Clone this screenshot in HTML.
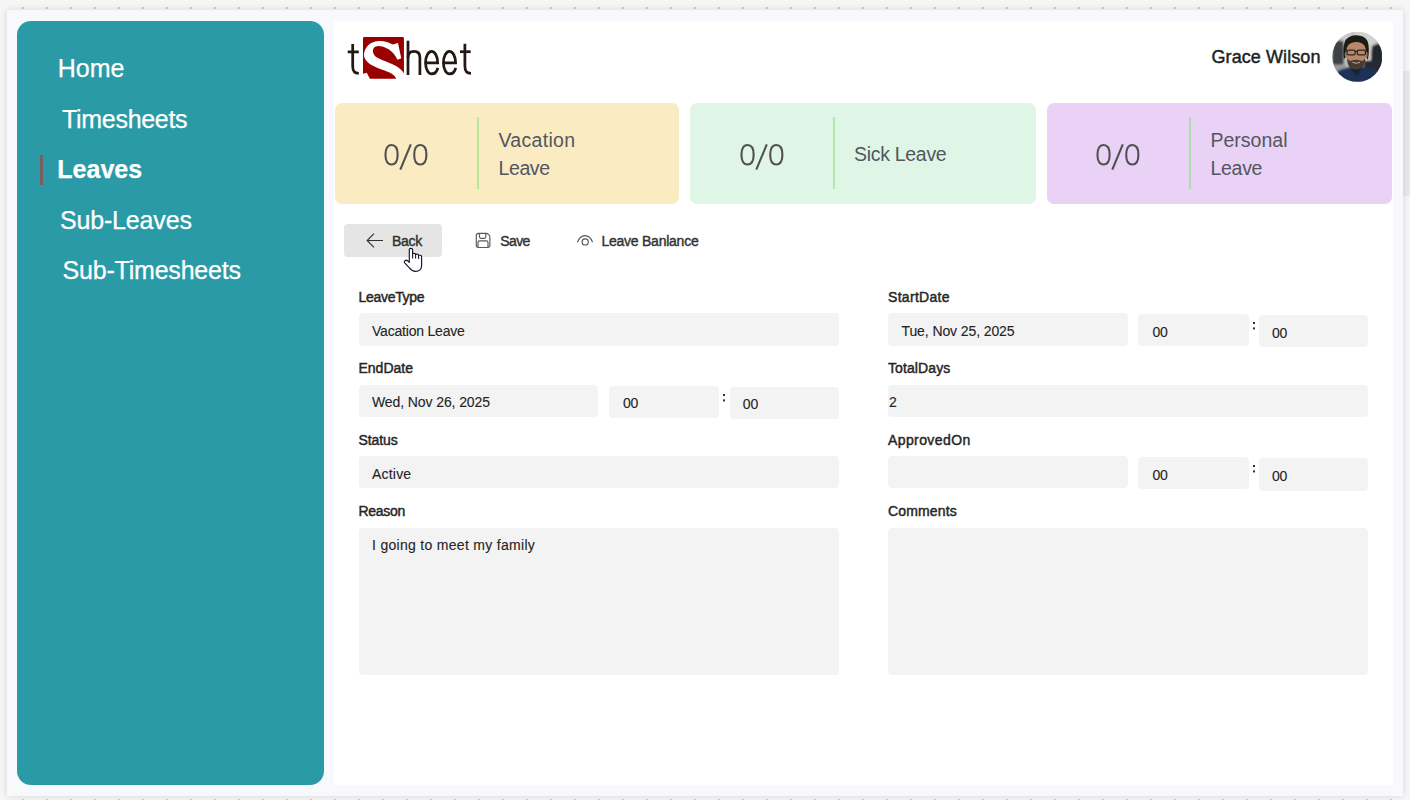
<!DOCTYPE html>
<html><head><meta charset="utf-8">
<style>
*{margin:0;padding:0;box-sizing:border-box}
html,body{width:1410px;height:800px;overflow:hidden}
body{background:#f6f6f6;font-family:"Liberation Sans",sans-serif;position:relative;
background-image:radial-gradient(circle,#c8c8c8 0.9px,transparent 1.2px);background-size:24px 24px;background-position:11px -4px}
.abs{position:absolute}
#win{position:absolute;left:7px;top:10px;width:1396px;height:786px;background:#f8f9fc;box-shadow:0 0 7px rgba(0,0,0,0.13)}
#side{position:absolute;left:17px;top:21px;width:306.6px;height:764px;background:#2a9ba6;border-radius:14px}
.nav{position:absolute;color:#fff;font-size:25px;line-height:25px;white-space:nowrap;-webkit-text-stroke:0.25px #fff}
#main{position:absolute;left:334px;top:21px;width:1059px;height:764px;background:#fff}
.card{position:absolute;top:102.8px;height:101.7px;border-radius:7px}
.card .num{position:absolute}
.card .vl{position:absolute;left:142.5px;top:14.3px;width:2px;height:71.7px;background:rgba(130,225,120,0.55)}
.card .lbl{position:absolute;font-size:19.5px;line-height:28.5px;color:#525760}
.btn{position:absolute;font-size:14px;color:#323130;line-height:14px;white-space:nowrap;letter-spacing:-0.25px;-webkit-text-stroke:0.4px #323130}
.lab{position:absolute;font-size:14px;color:#262626;line-height:14px;white-space:nowrap;letter-spacing:-0.3px;-webkit-text-stroke:0.45px #262626}
.inp{position:absolute;background:#f3f3f3;border-radius:4px}
.txt{position:absolute;font-size:14px;color:#242424;line-height:14px;white-space:nowrap;letter-spacing:-0.2px;-webkit-text-stroke:0.1px #242424}
</style></head><body>
<div class="abs" style="left:1403px;top:71px;width:7px;height:125px;background:#e9e9ea"></div>
<div id="win"></div>
<div id="side"></div>
<div class="nav" style="left:57.8px;top:55.7px">Home</div>
<div class="nav" style="left:62px;top:106.7px;letter-spacing:-0.3px">Timesheets</div>
<div class="abs" style="left:40px;top:155px;width:3px;height:30px;background:#7a5f5f"></div>
<div class="nav" style="left:57.3px;top:156.7px;font-weight:bold">Leaves</div>
<div class="nav" style="left:59.9px;top:207.7px;letter-spacing:-0.15px">Sub-Leaves</div>
<div class="nav" style="left:62.5px;top:257.7px;letter-spacing:-0.2px">Sub-Timesheets</div>

<div id="main"></div>
<!-- logo -->
<svg class="abs" style="left:340px;top:30px" width="140" height="56" viewBox="340 30 140 56">
  <g fill="none" stroke="#231815" stroke-width="2.75" stroke-linecap="butt">
    <path d="M352.7 44 V66 C352.7 71.5 354.5 73.4 358.8 73.4"/>
    <path d="M347.7 51.9 H358.8"/>
    <path d="M408 40.7 V75.05"/>
    <path d="M408 57.5 C408 53.5 410.5 51.4 414 51.4 C417.5 51.4 419.9 53.5 419.9 57.5 V75.05"/>
    <path d="M425.55 62.9 H437.7 C437.7 56.44 434.94 51.4 431.6 51.4 C428.26 51.4 425.55 56.44 425.55 62.65 C425.55 68.86 428.26 73.9 431.6 73.9 C434.5 73.9 437 71.5 437.8 67.9"/>
    <path d="M443.45 62.9 H455.6 C455.6 56.44 452.84 51.4 449.5 51.4 C446.16 51.4 443.45 56.44 443.45 62.65 C443.45 68.86 446.16 73.9 449.5 73.9 C452.4 73.9 454.9 71.5 455.7 67.9"/>
    <path d="M464.9 43.7 V66 C464.9 71.5 466.7 73.4 471 73.4"/>
    <path d="M460 51.7 H470.7"/>
  </g>
  <g transform="translate(358 33) scale(0.0625)">
    <path d="M80 85 Q80 65 100 65 L715 65 Q735 65 735 85 L735 730 L190 730 L140 635 L80 650 Z" fill="#9b0000"/>
    <path d="M640 160 L692 405 L632 428 C560 275 420 205 310 210 C230 215 215 300 275 370 C330 425 560 480 650 555 C700 595 735 630 760 690 L760 760 L610 760 L610 730 C590 660 500 625 400 590 C250 540 140 480 105 400 C75 320 120 200 230 150 C350 105 480 140 555 185 Z" fill="#fff"/>
  </g>
</svg>
<!-- user -->
<div class="abs" style="left:1211.5px;top:48.1px;font-size:18px;line-height:18px;color:#201f1e;white-space:nowrap;letter-spacing:0.08px;-webkit-text-stroke:0.45px #201f1e">Grace Wilson</div>
<svg class="abs" style="left:1332px;top:31.5px" width="50" height="50" viewBox="0 0 50 50">
  <defs><clipPath id="cc"><circle cx="25.3" cy="24.8" r="25"/></clipPath>
  <filter id="bl" x="-20%" y="-20%" width="140%" height="140%"><feGaussianBlur stdDeviation="0.85"/></filter>
  <filter id="bl2" x="-20%" y="-20%" width="140%" height="140%"><feGaussianBlur stdDeviation="0.45"/></filter></defs>
  <g clip-path="url(#cc)">
    <rect width="51" height="51" fill="#b9b9b9"/>
    <g filter="url(#bl)">
    <rect x="22" y="-2" width="22" height="30" fill="#d2d2d2"/>
    <rect x="8" y="-2" width="12" height="14" fill="#c9c9c9"/>
    <rect x="0.5" y="8.8" width="11" height="24" rx="1" fill="#3e4045"/>
    <rect x="0" y="33" width="14" height="6" fill="#9a9a9a"/>
    <path d="M40 14 Q46 10 51 14 L51 38 L40 38 Q38 26 40 14 Z" fill="#23262d"/>
    <path d="M32 29 L51 28 L51 40 L32 40 Z" fill="#262b36"/>
    <path d="M2 52 L4 40 Q12 35 24 34.5 Q36 35 46 39 L49 52 Z" fill="#1f3257"/>
    <path d="M18 34 L24.5 45 L31 34 Z" fill="#18202e"/>
    </g>
    <g filter="url(#bl2)">
    <path d="M11.8 27 Q10.5 14 13.5 8 Q18 3 24.5 3.2 Q32.5 3.4 35.5 9 Q38 16 36 28 L33.5 24 L33 15 Q30 10.5 24.5 10.5 Q18 10.5 15.5 15 L14.8 24 Z" fill="#1f1a17"/>
    <ellipse cx="14.4" cy="22.5" rx="1.6" ry="3" fill="#a06f52"/>
    <ellipse cx="34" cy="22.5" rx="1.6" ry="3" fill="#a06f52"/>
    <path d="M14.5 20 Q14.2 10.2 24.3 10 Q34 10.2 33.8 20 Q33.8 31 31 34 Q27.5 37 24.3 37 Q21 37 17.5 34 Q14.6 31 14.5 20 Z" fill="#b8876a"/>
    <path d="M15.2 26 Q15.5 34 18 35 Q21 37.5 24.3 37.5 Q27.5 37.5 30.5 35 Q33 34 33.3 26 Q31.5 30 28.5 28.6 Q24.3 27 20 28.6 Q17 30 15.2 26 Z" fill="#4a3a31"/>
    <path d="M20.5 30.3 Q24.3 32.3 28 30.3" fill="none" stroke="#cdbab0" stroke-width="0.9"/>
    </g>
    <g fill="none" stroke="#2b2624" stroke-width="1.25" filter="url(#bl2)"><rect x="15" y="18.2" width="8.2" height="4.6" rx="1.6"/><rect x="25.3" y="18.2" width="8.2" height="4.6" rx="1.6"/><path d="M23.2 19.4 H25.3"/></g>
  </g>
</svg>

<!-- cards -->
<div class="card" style="left:334.5px;width:344.9px;background:#faebc3">
  <svg class="num" style="left:45px;top:37px" width="52" height="32" viewBox="0 0 52 32"><g fill="none" stroke="#505050" stroke-width="2.1"><path d="M5.45 14.75 C5.45 8.51 7.65 5.00 11.55 5.00 C15.45 5.00 17.65 8.51 17.65 14.75 C17.65 20.99 15.45 24.50 11.55 24.50 C7.65 24.50 5.45 20.99 5.45 14.75 Z"/><path d="M20.3 29.6 L30.8 4.4"/><path d="M34.20 14.75 C34.20 8.51 36.40 5.00 40.30 5.00 C44.20 5.00 46.40 8.51 46.40 14.75 C46.40 20.99 44.20 24.50 40.30 24.50 C36.40 24.50 34.20 20.99 34.20 14.75 Z"/></g></svg>
  <div class="vl"></div>
  <div class="lbl" style="left:164px;top:23px"><span style="letter-spacing:0.3px">Vacation</span><br><span style="letter-spacing:-0.4px">Leave</span></div>
</div>
<div class="card" style="left:690px;width:346px;background:#dff6e6">
  <svg class="num" style="left:46px;top:37px" width="52" height="32" viewBox="0 0 52 32"><g fill="none" stroke="#505050" stroke-width="2.1"><path d="M5.45 14.75 C5.45 8.51 7.65 5.00 11.55 5.00 C15.45 5.00 17.65 8.51 17.65 14.75 C17.65 20.99 15.45 24.50 11.55 24.50 C7.65 24.50 5.45 20.99 5.45 14.75 Z"/><path d="M20.3 29.6 L30.8 4.4"/><path d="M34.20 14.75 C34.20 8.51 36.40 5.00 40.30 5.00 C44.20 5.00 46.40 8.51 46.40 14.75 C46.40 20.99 44.20 24.50 40.30 24.50 C36.40 24.50 34.20 20.99 34.20 14.75 Z"/></g></svg>
  <div class="vl"></div>
  <div class="lbl" style="left:164px;top:37.5px;letter-spacing:-0.3px">Sick Leave</div>
</div>
<div class="card" style="left:1046.5px;width:345px;background:#e9d2f6">
  <svg class="num" style="left:45px;top:37px" width="52" height="32" viewBox="0 0 52 32"><g fill="none" stroke="#505050" stroke-width="2.1"><path d="M5.45 14.75 C5.45 8.51 7.65 5.00 11.55 5.00 C15.45 5.00 17.65 8.51 17.65 14.75 C17.65 20.99 15.45 24.50 11.55 24.50 C7.65 24.50 5.45 20.99 5.45 14.75 Z"/><path d="M20.3 29.6 L30.8 4.4"/><path d="M34.20 14.75 C34.20 8.51 36.40 5.00 40.30 5.00 C44.20 5.00 46.40 8.51 46.40 14.75 C46.40 20.99 44.20 24.50 40.30 24.50 C36.40 24.50 34.20 20.99 34.20 14.75 Z"/></g></svg>
  <div class="vl"></div>
  <div class="lbl" style="left:164px;top:23px">Personal<br><span style="letter-spacing:-0.3px">Leave</span></div>
</div>

<!-- buttons -->
<div class="abs" style="left:344px;top:224px;width:98px;height:33px;background:#e5e5e5;border-radius:4px"></div>
<svg class="abs" style="left:366px;top:233px" width="18" height="16" viewBox="0 0 18 16"><path d="M8 0.6 L1.1 7.5 L8 14.4 M1.1 7.5 H17" fill="none" stroke="#323130" stroke-width="1.1"/></svg>
<div class="btn" style="left:392px;top:233.5px">Back</div>
<svg class="abs" style="left:475px;top:232px" width="16" height="17" viewBox="0 0 16 17"><g fill="none" stroke="#595959" stroke-width="1.15"><path d="M3.5 1.4 H11 C13 1.4 14.9 3.3 14.9 5.3 V13.3 Q14.9 15.5 12.7 15.5 H3.5 Q1.3 15.5 1.3 13.3 V3.6 Q1.3 1.4 3.5 1.4 Z"/><path d="M4.5 1.4 V4.8 Q4.5 6.3 6 6.3 H9.3 Q10.8 6.3 10.8 4.8 V1.4"/><path d="M3 15.5 V10.4 Q3 8.8 4.6 8.8 H11.4 Q13 8.8 13 10.4 V15.5"/></g></svg>
<div class="btn" style="left:500.3px;top:234.3px;letter-spacing:-0.6px">Save</div>
<svg class="abs" style="left:576px;top:233px" width="18" height="14" viewBox="0 0 18 14"><g fill="none" stroke="#555" stroke-width="1.15"><path d="M1.4 9.2 Q4 2.6 9 2.6 Q14 2.6 16.6 9.2"/><circle cx="9.2" cy="8.9" r="3.1"/></g></svg>
<div class="btn" style="left:601.5px;top:233.5px">Leave Banlance</div>

<!-- form labels -->
<div class="lab" style="left:358.5px;top:290.2px">LeaveType</div>
<div class="lab" style="left:888px;top:290.2px;letter-spacing:0.3px">StartDate</div>
<div class="lab" style="left:358.5px;top:361.2px;letter-spacing:0px">EndDate</div>
<div class="lab" style="left:888px;top:361.2px;letter-spacing:0.1px">TotalDays</div>
<div class="lab" style="left:358.5px;top:433.2px;letter-spacing:-0.1px">Status</div>
<div class="lab" style="left:888px;top:433.2px;letter-spacing:0.4px">ApprovedOn</div>
<div class="lab" style="left:358.5px;top:504.2px">Reason</div>
<div class="lab" style="left:888px;top:504.2px;letter-spacing:0.15px">Comments</div>

<!-- inputs -->
<div class="inp" style="left:359px;top:313px;width:479.75px;height:32.5px"></div>
<div class="txt" style="left:372px;top:324px">Vacation Leave</div>
<div class="inp" style="left:888px;top:313px;width:240.2px;height:32.5px"></div>
<div class="txt" style="left:901.5px;top:324px;letter-spacing:-0.1px">Tue, Nov 25, 2025</div>
<div class="inp" style="left:1138.4px;top:313.9px;width:110.4px;height:32.6px"></div>
<div class="txt" style="left:1152.5px;top:325px">00</div>
<div class="abs" style="left:1252.5px;top:321.5px;width:2.1px;height:2.1px;background:#323130;box-shadow:0 5.4px 0 #323130"></div>
<div class="inp" style="left:1259.3px;top:315.1px;width:108.9px;height:32.3px"></div>
<div class="txt" style="left:1272px;top:326px">00</div>
<div class="inp" style="left:359px;top:385px;width:238.8px;height:32px"></div>
<div class="txt" style="left:372px;top:395px;letter-spacing:-0.1px">Wed, Nov 26, 2025</div>
<div class="inp" style="left:609.3px;top:385.8px;width:109.8px;height:32px"></div>
<div class="txt" style="left:623px;top:396px">00</div>
<div class="abs" style="left:722.8px;top:394px;width:2.1px;height:2.1px;background:#323130;box-shadow:0 5.4px 0 #323130"></div>
<div class="inp" style="left:729.9px;top:387px;width:108.85px;height:31.75px"></div>
<div class="txt" style="left:742.8px;top:397px">00</div>
<div class="inp" style="left:888px;top:385px;width:480px;height:32px"></div>
<div class="txt" style="left:889px;top:395px">2</div>
<div class="inp" style="left:359px;top:456.25px;width:479.75px;height:31.75px"></div>
<div class="txt" style="left:372px;top:467px;letter-spacing:0.2px">Active</div>
<div class="inp" style="left:888px;top:456.25px;width:240.2px;height:31.75px"></div>
<div class="inp" style="left:1138.4px;top:457px;width:110.4px;height:32px"></div>
<div class="txt" style="left:1152.5px;top:468px">00</div>
<div class="abs" style="left:1252.5px;top:464.5px;width:2.1px;height:2.1px;background:#323130;box-shadow:0 5.4px 0 #323130"></div>
<div class="inp" style="left:1259.3px;top:458.4px;width:108.7px;height:32.2px"></div>
<div class="txt" style="left:1272px;top:469px">00</div>
<div class="inp" style="left:359px;top:528px;width:479.75px;height:146.5px"></div>
<div class="txt" style="left:372px;top:538px;letter-spacing:0.3px">I going to meet my family</div>
<div class="inp" style="left:888px;top:528px;width:480px;height:146.5px"></div>

<!-- cursor -->
<svg class="abs" style="left:400px;top:244px" width="26" height="30" viewBox="0 0 26 30"><path d="M9.3 18.4 V5.6 Q9.3 4.3 11 4.3 Q12.6 4.3 12.6 5.6 V9.6 Q12.6 9.4 14.1 9.4 Q15.6 9.4 15.6 10.7 Q15.6 10.1 17.1 10.1 Q18.6 10.1 18.6 11.4 Q18.6 11.25 20.1 11.25 Q21.6 11.25 21.6 12.6 V21.5 C21.6 25.5 19.3 27.4 15.3 27.4 C12.5 27.4 11 26 9.6 24.2 L4.7 18.9 C3.9 17.9 4.6 16.2 6.1 16.1 C7.1 16.1 8.3 17.3 9.3 18.4 Z" fill="#fff" stroke="#15152a" stroke-width="1.15" stroke-linejoin="round"/><path d="M12.6 9.5 V14.6 M15.6 10.6 V14.6 M18.6 11.4 V15" stroke="#15152a" stroke-width="1.1"/></svg>
</body></html>
